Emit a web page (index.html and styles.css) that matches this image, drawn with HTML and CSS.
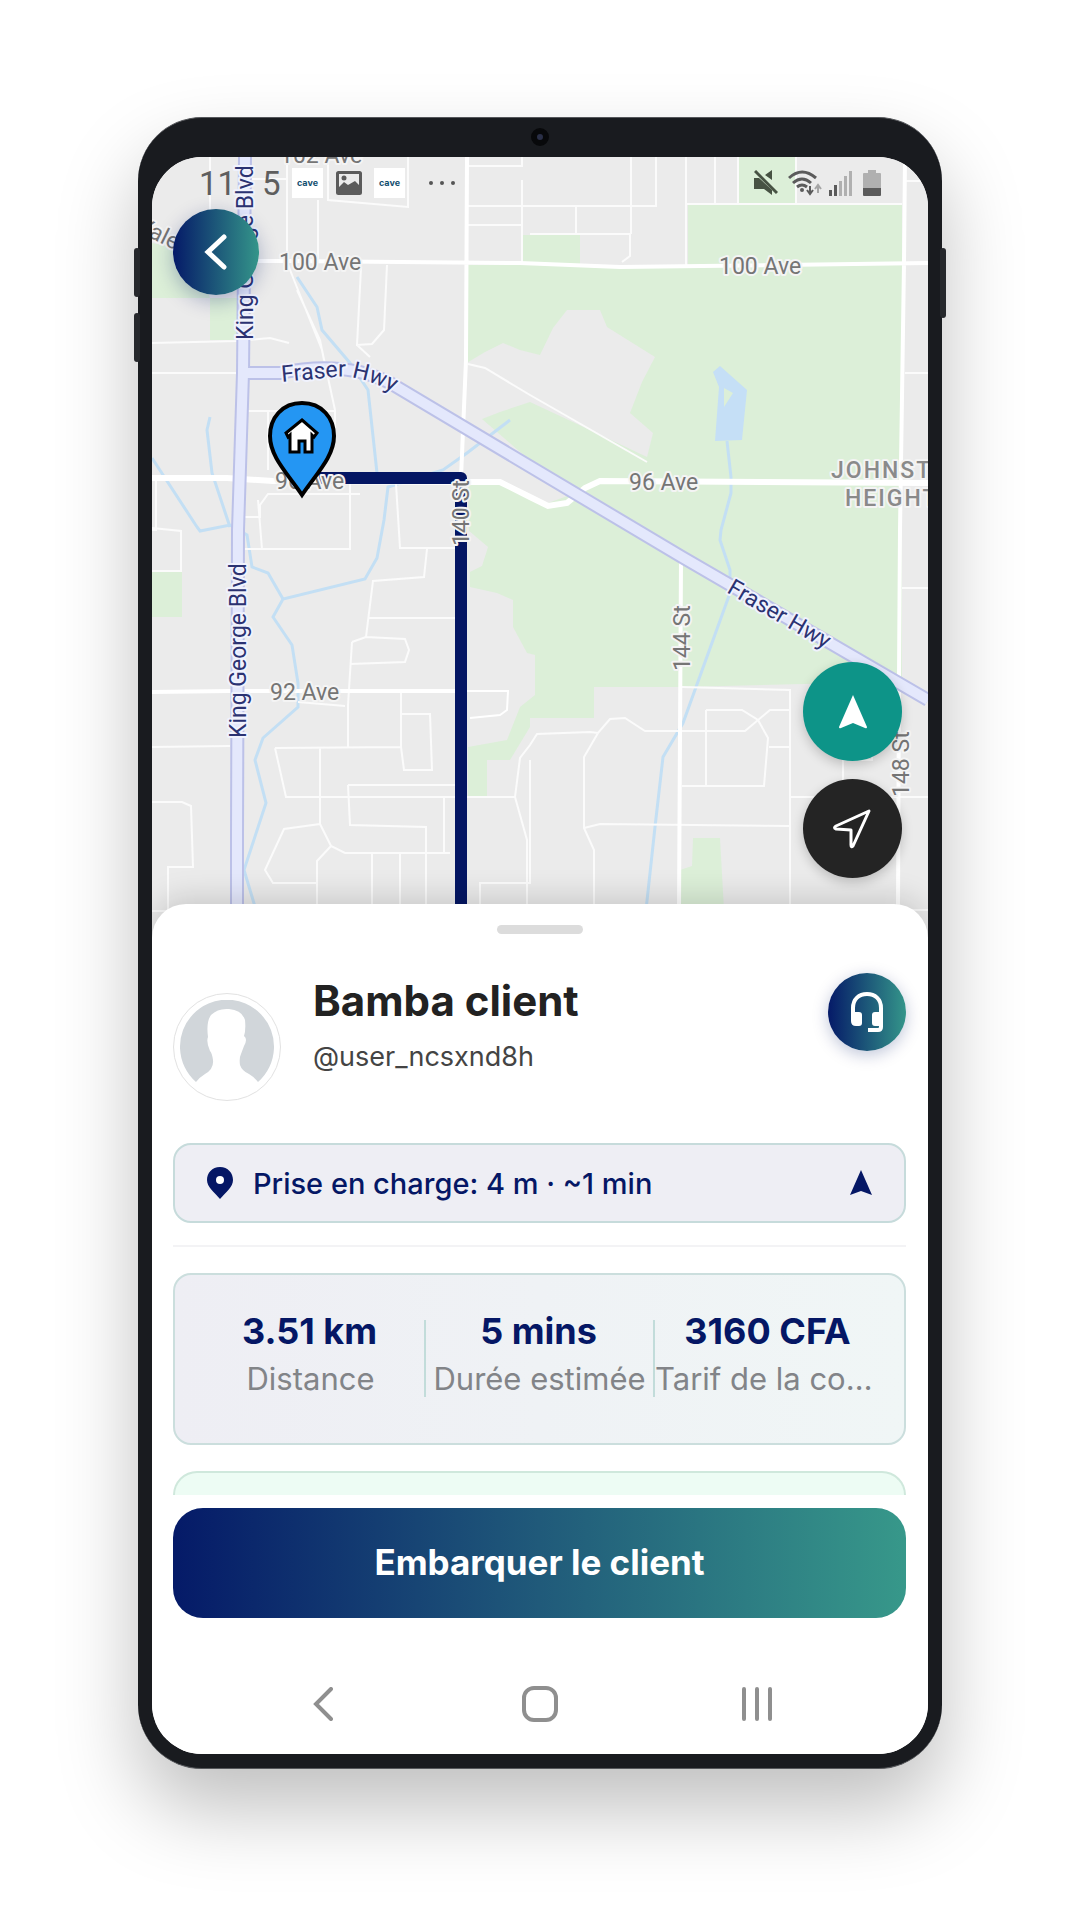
FILE: index.html
```html
<!DOCTYPE html>
<html lang="fr">
<head>
    <meta charset="UTF-8">
    <meta name="viewport" content="width=device-width, initial-scale=1.0">
    <title>Course en cours</title>
    <link rel="stylesheet" href="styles.css">
</head>
<body>
    <div class="phone">
        <span class="camera"></span>
        <span class="side-btn vol-up"></span>
        <span class="side-btn vol-down"></span>
        <span class="side-btn power"></span>

        <div class="screen">
            <section class="map-area">
                <svg class="map" viewBox="152 157 776 780" preserveAspectRatio="xMidYMin slice">
                    <!-- Parcs -->
                    <g fill="#dcefd8">
                        <path d="M152 243L190 250L210 298H237V340H210V298H152Z"/>
                        <path d="M522 235H580V264H522ZM738 157H796V205H902V266H688V205H738Z"/>
                        <path d="M152 571H182V617H152Z"/>
                        <path d="M468 265H902V683H845L681 687H594V718H530V727L510 760H487V797H468V747L507 740L520 707L535 695V655L527 653L513 627V600L497 593L470 587L468 482Z"/>
                        <path d="M693 838H720L724 910H680V870L692 866Z"/>
                    </g>
                    <g fill="#ebebeb">
                        <path d="M465 364L485 352L503 343L520 350L540 355L553 328L567 310H600L607 327L655 357L642 382L630 413L653 433L647 457L590 430L530 402L500 412L482 419L570 495L548 503L530 497L497 480H465Z"/>
                        <path d="M468 530L488 547L482 566L470 572Z"/>
                    </g>

                    <!-- Eau -->
                    <path fill="#c5dff6" fill-rule="evenodd" d="M720 366L747 390L742 440L715 441L719 387L713 372ZM724 388V407L733 393Z"/>
                    <g class="stream">
                        <path d="M727 441L731 477V493L721 530L720 540L730 570V593L683 723L663 757L655 827L646 910"/>
                        <path d="M297 277L317 307L322 330L350 363L368 390L377 473"/>
                        <path d="M510 420L467 453L443 470L388 487L384 520L377 558L365 579L283 599L273 617L292 645L298 683V707L263 738L255 760L266 803L244 870L256 910"/>
                        <path d="M210 417L207 430L212 473L230 527M152 458L197 527L200 531L230 525L247 535L252 567L268 573L283 599"/>
                    </g>

                    <!-- Petites rues -->
                    <g class="street">
                        <path d="M210 157V210M287 157V262L294 280L322 350L335 410M297 290L320 340L324 360M328 157V200L408 207V157M318 200V260M152 343L237 341L270 338L289 343M152 373H240M238 179H287"/>
                        <path d="M361 268L357 345L372 344L384 330L387 265M468 364L485 368L530 395L647 462M370 357L357 345"/>
                        <path d="M468 166H522V157M468 225H522V265M522 180V250M468 206H530M530 206H656V157M530 234H630V256L622 262M576 206V234M631 157V234M686 157V265M715 157V204H738V157M686 204H902M796 157V204M905 181H928M905 373H928M902 588H928"/>
                        <path d="M240 411H335V440M268 411V470M152 530H156V478M244 517H260V505L268 494H360M258 500L262 549M244 549H350V484M396 484L400 548H457M427 549L424 577L373 581L366 637M369 618H455M366 637L405 639L409 650L405 662L350 664M352 642L366 637M352 642L348 705V747M298 702L345 706"/>
                        <path d="M152 528L181 531V571H152M230 746L152 747M275 748L401 747V690M275 748L286 797H516M401 714H430L432 770H404L401 747M320 748V824L331 846L345 853H450M348 785H455M348 785L350 825L426 827V904M444 797V853M320 824L284 829L265 870L273 883H317M331 846L317 861V910M372 853V904M400 853V904"/>
                        <path d="M152 802H182L191 806L193 867H168V910M152 911H185M480 904V883H530V760M515 797L527 840V904M515 797L520 758L530 745L537 734L590 732L598 733L610 719L625 718L645 731H745L770 710L790 710M598 733L584 757V828L594 850V904M584 828L600 824L790 826"/>
                        <path d="M682 687L790 690V904M706 710V786M706 710H742L758 720L768 738L764 786H682M769 747H790M790 797H928M843 760H872V690M843 740V797M890 910H928"/>
                    </g>

                    <!-- Axes -->
                    <g class="road">
                        <path d="M240 261H290L520 263L620 267L928 263M467 157L466 360L461 478M905 157L904 263L900 530L899 677L898 910M152 692L230 691H455M681 560L679 910"/>
                        <path class="thin" d="M455 691H508L507 710L500 715L470 718"/>
                        <path class="wide" d="M152 478H227L273 481L463 482H500L530 497L548 506L567 503L585 488L600 481L928 483"/>
                    </g>

                    <!-- Grands boulevards -->
                    <g class="highway-edge">
                        <path d="M245 157L243 373L238 530L237 837L237 910M243 373H280Q345 360 390 383L682 557L830 643L928 700"/>
                    </g>
                    <g class="highway">
                        <path d="M245 157L243 373L238 530L237 837L237 910M243 373H280Q345 360 390 383L682 557L830 643L928 700"/>
                    </g>

                    <!-- Trajet -->
                    <path class="route" d="M303 476L320 478H461V910"/>

                    <!-- Noms -->
                    <g class="label">
                        <text x="280" y="163">102 Ave</text>
                        <text x="279" y="270">100 Ave</text>
                        <text x="719" y="274">100 Ave</text>
                        <text x="275" y="489">96 Ave</text>
                        <text x="629" y="490">96 Ave</text>
                        <text x="270" y="700">92 Ave</text>
                        <text transform="translate(469 546) rotate(-90)">140 St</text>
                        <text transform="translate(690 671) rotate(-90)">144 St</text>
                        <text transform="translate(909 797) rotate(-90)">148 St</text>
                        <text transform="translate(136 231) rotate(26)">Yale</text>
                    </g>
                    <g class="label area">
                        <text x="831" y="478">JOHNSTON</text>
                        <text x="845" y="506">HEIGHTS</text>
                    </g>
                    <g class="label hwy">
                        <text transform="translate(253 340) rotate(-90)">King George Blvd</text>
                        <text transform="translate(246 738) rotate(-90)">King George Blvd</text>
                        <path id="fraser" d="M282 382L335 377Q362 374 402 397" fill="none"/>
                        <text><textPath href="#fraser">Fraser Hwy</textPath></text>
                        <text transform="translate(726 592) rotate(30)">Fraser Hwy</text>
                    </g>

                    <!-- Point de prise en charge -->
                    <path d="M302 403C322 403 334 418 334 436C334 457 316 474 302 495C288 474 270 457 270 436C270 418 282 403 302 403Z" fill="#2496f3" stroke="#000" stroke-width="4"/>
                    <path d="M302 420L317 433L314 437L312 435V452H305V441H299V452H290V435L288 437L286 433Z" fill="#fff" stroke="#000" stroke-width="3"/>
                </svg>

                <div class="status-bar">
                    <span class="clock">11</span>
                    <span class="clock">5</span>
                    <span class="notif">cave</span>
                    <svg width="26" height="24" viewBox="0 0 26 24"><rect x="1.5" y="1.5" width="23" height="21" rx="1" fill="none" stroke="#5b5b5b" stroke-width="3"/><path d="M3 20V16L8 11L12 14L19 10L24 15V21H3Z" fill="#5b5b5b"/><circle cx="8" cy="7" r="2.5" fill="#5b5b5b"/></svg>
                    <span class="notif">cave</span>
                    <svg class="dots" width="28" height="6" viewBox="0 0 28 6" fill="#555"><circle cx="3" cy="3" r="2"/><circle cx="14" cy="3" r="2"/><circle cx="25" cy="3" r="2"/></svg>
                    <span class="spacer"></span>
                    <svg width="24" height="26" viewBox="0 0 24 26"><path d="M0 8H5L18 20V25L10 19H0ZM11 5L18 0V10Z" fill="#475243"/><path d="M1 1L23 23" stroke="#475243" stroke-width="3"/></svg>
                    <svg class="wifi" width="34" height="26" viewBox="0 0 34 26" fill="none" stroke="#5b5b5b" stroke-width="3"><path d="M1 8Q14 -4 28 8M5 13Q14 5 23 13M9 17Q14 13 19 17"/><circle cx="14" cy="20" r="2" fill="#5b5b5b" stroke="none"/><path d="M22 16V23M19 20L22 24L25 20" stroke-width="2"/><path d="M30 23V16M27 19L30 15L33 19" stroke="#a5a5a5" stroke-width="2"/></svg>
                    <svg width="24" height="25" viewBox="0 0 24 25"><path d="M0 19h3v6h-3zM5 14h3v11h-3z" fill="#5b5b5b"/><path d="M10 10h3v15h-3zM15 5h3v20h-3zM20 0h3v25h-3z" fill="#b0b0b0"/></svg>
                    <svg class="battery" width="18" height="26" viewBox="0 0 18 26"><path d="M5 0H13V3H17Q18 3 18 4V18H0V4Q0 3 1 3H5Z" fill="#b0b0b0"/><path d="M0 18H18V25Q18 26 17 26H1Q0 26 0 25Z" fill="#5b5b5b"/></svg>
                </div>

                <button class="round back" aria-label="Retour">
                    <svg width="24" height="38" viewBox="0 0 24 38"><path d="M20 4L4 19L20 34" fill="none" stroke="#fff" stroke-width="5" stroke-linecap="round"/></svg>
                </button>

                <div class="map-actions">
                    <button class="round nav-go" aria-label="Naviguer">
                        <svg width="30" height="36" viewBox="0 0 30 36"><path d="M15 1L29 33Q29 35 27 34L15 29L3 34Q1 35 1 33Z" fill="#fff"/></svg>
                    </button>
                    <button class="round locate" aria-label="Ma position">
                        <svg width="40" height="40" viewBox="0 0 40 40"><path d="M36 2L20 37Q18 39 18 36V21L3 20Q0 19 3 17Z" fill="none" stroke="#fff" stroke-width="3" stroke-linejoin="round"/></svg>
                    </button>
                </div>
            </section>

            <section class="sheet">
                <div class="grabber"></div>

                <div class="client">
                    <div class="avatar">
                        <svg width="94" height="94" viewBox="0 0 94 94"><path d="M16 82A47 47 0 1 1 78 82Q74 77 69 74Q62 71 60 65Q59 58 61 54L64 46Q68 39 64 36Q66 30 65 20Q62 10 49 9Q38 8 31 15Q26 22 28 37Q26 42 30 51Q32 53 33 60Q34 69 25 74Q20 77 16 82Z" fill="#d1d6da"/></svg>
                    </div>
                    <div class="client-info">
                        <h1>Bamba client</h1>
                        <p>@user_ncsxnd8h</p>
                    </div>
                    <button class="round support" aria-label="Support">
                        <svg width="34" height="42" viewBox="0 0 34 42"><path d="M3 24V17C3 8 9 3 17 3S31 8 31 17V36Q31 39 28 39H18" fill="none" stroke="#fff" stroke-width="4" stroke-linejoin="round"/><path d="M1 21H9Q12 21 12 24V32Q12 35 9 35H6Q1 35 1 30ZM33 21H25Q22 21 22 24V32Q22 35 25 35H33Z" fill="#fff"/></svg>
                    </button>
                </div>

                <button class="pickup">
                    <svg width="26" height="32" viewBox="0 0 26 32"><path d="M13 0C5 0 0 6 0 13C0 20 7 25 13 32C19 25 26 20 26 13C26 6 21 0 13 0Z" fill="#051765"/><circle cx="13" cy="13" r="4" fill="#fff"/></svg>
                    <span>Prise en charge: 4 m · ~1 min</span>
                    <svg width="22" height="26" viewBox="0 0 22 26"><path d="M11 0L22 25L11 21L0 25Z" fill="#051765"/></svg>
                </button>

                <hr>

                <div class="stats">
                    <div class="stat">
                        <strong>3.51 km</strong>
                        <span>Distance</span>
                    </div>
                    <div class="stat">
                        <strong>5 mins</strong>
                        <span>Durée estimée</span>
                    </div>
                    <div class="stat">
                        <strong>3160 CFA</strong>
                        <span>Tarif de la course</span>
                    </div>
                </div>

                <div class="next-card"></div>

                <button class="board">Embarquer le client</button>

                <nav class="android-nav">
                    <button aria-label="Retour"><svg width="20" height="34" viewBox="0 0 20 34"><path d="M18 2L3 17L18 32"/></svg></button>
                    <button aria-label="Accueil"><svg width="36" height="36" viewBox="0 0 36 36"><rect x="2" y="2" width="32" height="32" rx="10"/></svg></button>
                    <button aria-label="Applications"><svg width="32" height="34" viewBox="0 0 32 34"><path d="M3 2V32M16 2V32M29 2V32"/></svg></button>
                </nav>
            </section>
        </div>
    </div>
</body>
</html>
```
FILE: styles.css
```css
* {
    box-sizing: border-box;
}
body {
    margin: 0;
    padding: 117px 16px 152px;
    background: #fff;
    font-family: Inter, "Liberation Sans", sans-serif;
    overflow-x: hidden;
}
button {
    padding: 0;
    border: none;
    background: none;
    font-family: inherit;
    cursor: pointer;
}
svg {
    display: block;
    flex-shrink: 0;
}

/* Coque */
.phone {
    position: relative;
    max-width: 804px;
    margin: 0 auto;
    padding: 39px 14px 14px;
    border: 1px solid #55575b;
    border-width: 1px 0;
    border-radius: 64px;
    background: #191b1f;
    box-shadow: 0 40px 80px rgba(0, 0, 0, 0.25);
}
.camera {
    position: absolute;
    top: 10px;
    left: 50%;
    width: 18px;
    height: 18px;
    margin-left: -9px;
    border: 6px solid #08090b;
    border-radius: 50%;
    background: #2b3048;
}
.side-btn {
    position: absolute;
    left: -4px;
    width: 6px;
    height: 49px;
    border-radius: 3px;
    background: #26282c;
}
.vol-up {
    top: 130px;
}
.vol-down {
    top: 195px;
}
.power {
    top: 130px;
    left: auto;
    right: -4px;
    height: 70px;
}
.screen {
    overflow: hidden;
    border-radius: 50px;
    background: #fff;
}

/* Carte */
.map-area {
    position: relative;
    height: 780px;
    background: #ebebeb;
}
.map {
    width: 100%;
    height: 100%;
}
.stream {
    fill: none;
    stroke: #c3dff4;
    stroke-width: 3;
}
.street {
    fill: none;
    stroke: #fbfbfb;
    stroke-width: 2;
}
.road {
    fill: none;
    stroke: #fff;
    stroke-width: 4;
}
.road .thin {
    stroke-width: 2;
}
.road .wide {
    stroke-width: 6;
}
.highway-edge {
    fill: none;
    stroke: #bcc1e8;
    stroke-width: 14;
}
.highway {
    fill: none;
    stroke: #e4e8fc;
    stroke-width: 10;
}
.route {
    fill: none;
    stroke: #041663;
    stroke-width: 12;
    stroke-linejoin: round;
}
.label {
    font-family: Roboto, sans-serif;
    font-size: 23px;
    fill: #757575;
    stroke: #f4f4f4;
    stroke-width: 4;
    stroke-linejoin: round;
    paint-order: stroke;
}
.area {
    font-weight: 500;
    letter-spacing: 2px;
    fill: #8a8a8a;
}
.hwy {
    fill: #2b3272;
    stroke: #f0f2fd;
}
.hwy path {
    stroke: none;
}

.status-bar {
    position: absolute;
    top: 8px;
    left: 47px;
    right: 47px;
    display: flex;
    align-items: center;
    height: 36px;
}
.clock {
    width: 63px;
    font-family: Roboto, sans-serif;
    font-size: 33px;
    color: #5e5e5e;
}
.clock + .clock {
    width: 30px;
}
.notif {
    width: 31px;
    margin-right: 13px;
    background: #fff;
    color: #14506f;
    font-size: 9px;
    font-weight: 700;
    line-height: 30px;
    text-align: center;
}
.notif + svg {
    margin-right: 12px;
}
.status-bar .dots {
    margin-left: 10px;
}
.spacer {
    flex: 1;
}
.wifi {
    margin: 0 7px 0 10px;
}
.battery {
    margin-left: 10px;
}
.round {
    display: flex;
    align-items: center;
    justify-content: center;
    flex-shrink: 0;
    border-radius: 50%;
}
.back {
    position: absolute;
    top: 52px;
    left: 21px;
    width: 86px;
    height: 86px;
    background: linear-gradient(90deg, #051a68, #34958a);
    box-shadow: 0 6px 20px rgba(5, 26, 104, 0.3);
}
.map-actions {
    position: absolute;
    top: 505px;
    right: 26px;
    display: flex;
    flex-direction: column;
    gap: 18px;
}
.map-actions .round {
    width: 99px;
    height: 99px;
    box-shadow: 0 4px 12px rgba(0, 0, 0, 0.2);
}
.nav-go {
    background: #0d9488;
}
.locate {
    background: #242424;
}

/* Panneau du bas */
.sheet {
    position: relative;
    margin-top: -33px;
    padding: 21px 22px 0 21px;
    border-radius: 34px 34px 0 0;
    background: #fff;
    box-shadow: 0 -6px 30px rgba(0, 0, 0, 0.15);
}
.grabber {
    width: 86px;
    height: 9px;
    margin: 0 auto;
    border-radius: 5px;
    background: #dcdcdc;
}
.client {
    display: flex;
    align-items: flex-start;
    margin-top: 39px;
}
.avatar {
    display: flex;
    align-items: center;
    justify-content: center;
    width: 108px;
    height: 108px;
    margin-top: 20px;
    border: 1px solid #e2e2e2;
    border-radius: 50%;
}
.client-info {
    flex: 1;
    margin-left: 32px;
}
h1 {
    margin: 4px 0 10px;
    color: #222;
    font-size: 42px;
    font-weight: 700;
    line-height: 48px;
}
.client-info p {
    margin: 0;
    color: #444;
    font-size: 27px;
    line-height: 44px;
}
.support {
    width: 78px;
    height: 78px;
    background: linear-gradient(90deg, #051a68, #34958a);
    box-shadow: 0 4px 16px rgba(5, 26, 104, 0.25);
}
.pickup {
    display: flex;
    align-items: center;
    gap: 20px;
    width: 100%;
    height: 80px;
    margin-top: 42px;
    padding: 0 32px;
    border: 2px solid #c6dbdb;
    border-radius: 18px;
    background: #eeeef4;
    color: #051765;
    font-size: 29px;
    font-weight: 500;
}
.pickup span {
    flex: 1;
    text-align: left;
}
hr {
    height: 2px;
    margin: 22px 0 26px;
    border: none;
    background: #f3f3f5;
}
.stats {
    display: grid;
    grid-template-columns: repeat(3, minmax(0, 1fr));
    height: 172px;
    padding: 34px 22px 0 20px;
    border: 2px solid #cbdedd;
    border-radius: 18px;
    background: linear-gradient(90deg, #eeeef4, #f0f6f6);
}
.stat {
    position: relative;
    text-align: center;
}
.stat + .stat::before {
    content: "";
    position: absolute;
    top: 11px;
    left: 0;
    width: 2px;
    height: 77px;
    background: #c2dcda;
}
.stat strong {
    display: block;
    color: #051765;
    font-size: 36px;
    line-height: 44px;
}
.stat span {
    display: block;
    padding-left: 2px;
    overflow: hidden;
    color: #828488;
    font-size: 31px;
    line-height: 52px;
    white-space: nowrap;
    text-overflow: ellipsis;
}
.next-card {
    height: 24px;
    margin-top: 26px;
    border: 2px solid #cfe8dc;
    border-bottom: none;
    border-radius: 24px 24px 0 0;
    background: #edfcf4;
}
.board {
    width: 100%;
    height: 110px;
    margin-top: 13px;
    padding-bottom: 2px;
    border-radius: 30px;
    background: linear-gradient(90deg, #051a68, #205a7a 50%, #37988a);
    color: #fff;
    font-size: 35px;
    font-weight: 700;
}
.android-nav {
    display: grid;
    grid-template-columns: repeat(3, 217px);
    justify-content: center;
    padding: 68px 0 32px;
}
.android-nav button {
    display: flex;
    align-items: center;
    justify-content: center;
    height: 36px;
}
.android-nav svg {
    fill: none;
    stroke: #8f8f8f;
    stroke-width: 4;
    stroke-linecap: round;
}
```
